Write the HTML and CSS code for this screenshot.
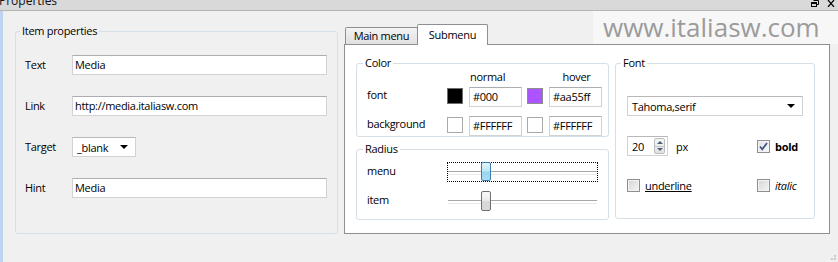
FILE: index.html
```html
<!DOCTYPE html>
<html>
<head>
<meta charset="utf-8">
<title>Properties</title>
<link rel="stylesheet" href="styles.css">
</head>
<body>
<div class="window">
  <div class="titlebar">
    <span class="title">Properties</span>
    <span class="ctrls">
      <svg class="ic-restore" width="8" height="7" viewBox="0 0 8 7"><path d="M2.5 0.5h5v4h-1.5" fill="none" stroke="#000"/><rect x="0.5" y="2.5" width="5" height="4" fill="none" stroke="#000"/><rect x="0" y="2" width="6" height="2" fill="#000"/></svg>
      <svg class="ic-close" width="8" height="7" viewBox="0 0 8 7"><path d="M1 0L7 7M7 0L1 7" stroke="#000" stroke-width="1.2"/></svg>
    </span>
  </div>
  <div class="content">
    <fieldset class="group item-props">
      <legend>Item properties</legend>
      <div class="form">
        <span class="lbl">Text</span><div class="input">Media</div>
        <span class="lbl">Link</span><div class="input">http://media.italiasw.com</div>
        <span class="lbl">Target</span><div class="select target"><span>_blank</span><i class="arrow"></i></div>
        <span class="lbl">Hint</span><div class="input">Media</div>
      </div>
    </fieldset>

    <div class="tabwidget">
      <div class="tabs">
        <div class="tab">Main menu</div>
        <div class="tab active">Submenu</div>
      </div>
      <div class="pane">
        <div class="col">
          <fieldset class="group color">
            <legend>Color</legend>
            <div class="color-grid">
              <span></span><span></span><span class="hdr normal">normal</span><span></span><span class="hdr hover">hover</span>
              <span class="lbl">font</span><span class="swatch black"></span><div class="input cin">#000</div><span class="swatch purple"></span><div class="input cin">#aa55ff</div>
              <span class="lbl">background</span><span class="swatch white"></span><div class="input cin">#FFFFFF</div><span class="swatch white"></span><div class="input cin">#FFFFFF</div>
            </div>
          </fieldset>
          <fieldset class="group radius">
            <legend>Radius</legend>
            <div class="radius-grid">
              <span class="lbl">menu</span>
              <div class="slider focus"><span class="thumb blue"></span></div>
              <span class="lbl">item</span>
              <div class="slider"><span class="thumb"></span></div>
            </div>
          </fieldset>
        </div>
        <fieldset class="group font">
          <legend>Font</legend>
          <div class="select family"><span>Tahoma,serif</span><i class="arrow"></i></div>
          <div class="frow first">
            <div class="fcell">
              <div class="spin"><span>20</span><span class="spin-btns"><i class="up"></i><i class="down"></i></span></div>
              <span class="px">px</span>
            </div>
            <div class="fcell">
              <span class="check checked"><svg width="11" height="11" viewBox="0 0 11 11"><path d="M2 5.5L4.3 8.3L9 2" fill="none" stroke="#3d5685" stroke-width="1.8"/></svg></span>
              <b class="ctext">bold</b>
            </div>
          </div>
          <div class="frow second">
            <div class="fcell">
              <span class="check"></span>
              <u class="ctext">underline</u>
            </div>
            <div class="fcell">
              <span class="check"></span>
              <i class="ctext">italic</i>
            </div>
          </div>
        </fieldset>
      </div>
    </div>
  </div>
  <div class="watermark">www.italiasw.com</div>
  <div class="grip"></div>
</div>
</body>
</html>
```
FILE: styles.css
```css
* { box-sizing: border-box; }
html, body { margin: 0; padding: 0; }
body {
  width: 838px;
  height: 262px;
  overflow: hidden;
  background: #f0f0f0;
  font-family: "Open Sans", "Noto Sans", sans-serif;
  font-size: 11px;
  letter-spacing: -0.3px;
  color: #000;
}
.window { position: relative; width: 838px; height: 262px; }

.titlebar {
  height: 11px;
  background: #d9d9d9;
  border-bottom: 1px solid #b4b4b4;
  display: flex;
  justify-content: space-between;
  overflow: hidden;
}
.title { font-size: 12px; line-height: 12px; margin-top: -5px; margin-left: -1px; color: #111; letter-spacing: 0; }
.ctrls { display: flex; align-items: flex-start; gap: 8px; padding-right: 3px; }
.ctrls svg { display: block; }

.content {
  display: flex;
  align-items: flex-start;
  height: 251px;
  border-left: 3px solid #bfd4ee;
  padding: 13px 0 0 12px;
}

.group {
  margin: 0;
  border: 1px solid #d5dfe5;
  border-radius: 3px;
  min-width: 0;
}
.group legend { padding: 0 2px; line-height: 14px; }

.item-props { width: 323px; height: 210px; padding: 17px 0 0 9px; }
.item-props legend { margin-left: -5px; }
.form {
  display: grid;
  grid-template-columns: 47px 255px;
  grid-auto-rows: 20px;
  row-gap: 21px;
  align-items: center;
}
.lbl { line-height: 16px; white-space: nowrap; }

.input {
  height: 20px;
  background: #fff;
  border: 1px solid #d2d2d2;
  border-top-color: #abadb3;
  padding: 0 2px;
  line-height: 18px;
  white-space: nowrap;
  overflow: hidden;
}

.select {
  height: 20px;
  background: #fff;
  border: 1px solid #d2d2d2;
  border-top-color: #b8b8b8;
  display: flex;
  align-items: center;
  justify-content: space-between;
  padding: 0 7px 0 4px;
}
.select.target { width: 64px; }
.arrow {
  width: 0; height: 0;
  border-left: 4px solid transparent;
  border-right: 4px solid transparent;
  border-top: 4px solid #000;
}

.tabwidget { margin-left: 6px; width: 486px; }
.tabs { display: flex; align-items: flex-end; height: 20px; padding-left: 1px; position: relative; z-index: 1; }
.tab {
  height: 17px;
  width: 73px;
  border: 1px solid #8e8f8f;
  border-bottom: none;
  background: linear-gradient(#f3f3f3, #e1e1e1);
  text-align: center;
  line-height: 16px;
  border-radius: 2px 2px 0 0;
}
.tab.active {
  height: 21px;
  width: 71px;
  margin-left: -1px;
  margin-bottom: -1px;
  background: #fff;
  line-height: 19px;
}
.pane {
  height: 190px;
  background: #fff;
  border: 1px solid #8e8f8f;
  display: flex;
  align-items: flex-start;
  padding: 11px 0 0 11px;
}
.col { display: flex; flex-direction: column; }

.color { width: 253px; height: 81px; padding: 0 0 0 10px; }
.color legend, .radius legend { margin-left: -4px; }
.color-grid {
  display: grid;
  grid-template-columns: 80px 22px 58px 22px 53px;
  grid-template-rows: 17px 29px 20px;
  align-items: start;
}
.hdr { line-height: 14px; }
.hdr.normal { padding-left: 1px; }
.hdr.hover { text-align: center; padding-left: 2px; }
.color-grid .lbl { margin-top: 0; }
.swatch { width: 16px; height: 16px; margin-top: 1px; border: 1px solid #8a8a8a; }
.swatch.black { background: #000; border-color: #6d6d6d; }
.swatch.purple { background: #aa55ff; border-color: #8d8d8d; }
.swatch.white { background: #fff; border-color: #a9a9a9; }
.input.cin { width: 53px; padding: 0 3px; }

.radius { width: 253px; height: 78px; margin-top: 5px; padding: 6px 0 0 10px; }
.radius-grid {
  display: grid;
  grid-template-columns: 80px 151px;
  grid-auto-rows: 20px;
  row-gap: 9px;
  align-items: center;
}
.radius-grid .lbl { margin-top: -3px; }
.slider { position: relative; height: 20px; }
.slider::before {
  content: "";
  position: absolute;
  left: 1px; right: 1px; top: 9px;
  height: 2px;
  border-top: 1px solid #a7a7a7;
  border-bottom: 1px solid #e8e8e8;
}
.slider.focus { outline: 1px dotted #000; outline-offset: -1px; }
.thumb {
  position: absolute;
  left: 34px; top: 0;
  width: 10px; height: 20px;
  border: 1px solid #707070;
  border-radius: 2px;
  background: linear-gradient(to bottom, #fafafa 0%, #ececec 45%, #d6d6d6 55%, #dadada 100%);
}
.thumb.blue {
  top: 0; height: 19px;
  border-color: #3c7fb1;
  background: linear-gradient(to bottom, #e5f5fc 0%, #bfe6f7 45%, #98d5f0 55%, #a8dcf3 100%);
}

.font { width: 200px; height: 163px; margin-left: 6px; padding: 26px 0 0 11px; }
.font legend { margin-left: -6px; }
.select.family { width: 176px; padding-right: 7px; padding-left: 4px; }
.frow { display: flex; height: 20px; align-items: center; }
.frow.first { margin-top: 20px; }
.frow.second { margin-top: 19px; }
.fcell { display: flex; align-items: center; }
.fcell:first-child { width: 130px; }
.spin {
  width: 41px; height: 20px;
  background: #fff;
  border: 1px solid #d2d2d2;
  border-top-color: #b8b8b8;
  display: flex;
  align-items: center;
  justify-content: space-between;
  padding: 0 2px 0 4px;
}
.spin-btns { display: flex; flex-direction: column; width: 11px; height: 16px; border: 1px solid #bcbcbc; border-radius: 2px; background: linear-gradient(#f6f6f6, #e2e2e2); }
.spin-btns i { flex: 1; display: flex; align-items: center; justify-content: center; }
.spin-btns i.up { border-bottom: 1px solid #c8c8c8; }
.spin-btns i.up::after { content: ""; border-left: 3px solid transparent; border-right: 3px solid transparent; border-bottom: 3px solid #4f5f7a; }
.spin-btns i.down::after { content: ""; border-left: 3px solid transparent; border-right: 3px solid transparent; border-top: 3px solid #4f5f7a; }
.px { margin-left: 8px; }
.check {
  width: 13px; height: 13px;
  border: 1px solid #8e8f8f;
  background: linear-gradient(135deg, #d5d5d5, #f5f5f5);
  box-shadow: inset 0 0 0 1px #f3f3f3;
  display: flex; align-items: center; justify-content: center;
}
.check.checked { background: linear-gradient(135deg, #e0e0e0, #fafafa); }
.check svg { display: block; }
.ctext { margin-left: 5px; }

.watermark {
  position: absolute;
  right: 0; top: 11px;
  width: 245px; height: 33px;
  background: rgba(255, 255, 255, 0.45);
  color: #9b9b9b;
  font-size: 26px;
  line-height: 33px;
  letter-spacing: 0;
  padding-left: 10px;
  white-space: nowrap;
}
.grip {
  position: absolute;
  right: 2px; bottom: 2px;
  width: 2px; height: 2px;
  background: #c8c8c8;
  box-shadow: -3px 0 #c8c8c8, 0 -3px #c8c8c8;
}
```
